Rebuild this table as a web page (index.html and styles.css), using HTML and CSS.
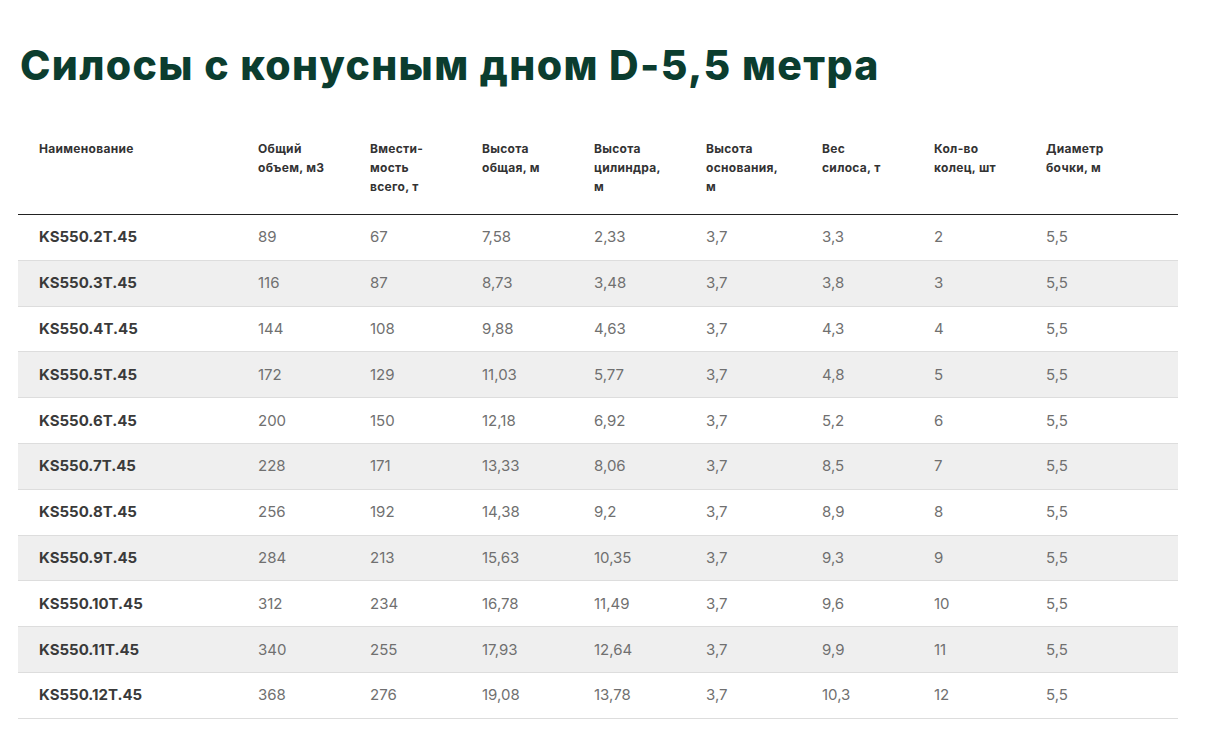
FILE: index.html
```html
<!DOCTYPE html>
<html lang="ru">
<head>
<meta charset="utf-8">
<title>Силосы с конусным дном D-5,5 метра</title>
<link rel="stylesheet" href="styles.css">
</head>
<body>
<main class="page">
  <h1 class="title">Силосы с конусным дном D-5,5 метра</h1>
  <table class="specs">
    <colgroup>
      <col class="c-name"><col class="c-n"><col class="c-n"><col class="c-n"><col class="c-n"><col class="c-w"><col class="c-n"><col class="c-n"><col class="c-last">
    </colgroup>
    <thead>
      <tr>
        <th>Наименование</th>
        <th>Общий<br>объем, м3</th>
        <th>Вмести-<br>мость<br>всего, т</th>
        <th>Высота<br>общая, м</th>
        <th>Высота<br>цилиндра,<br>м</th>
        <th>Высота<br>основания,<br>м</th>
        <th>Вес<br>силоса, т</th>
        <th>Кол-во<br>колец, шт</th>
        <th>Диаметр<br>бочки, м</th>
      </tr>
    </thead>
    <tbody>
      <tr><td>KS550.2T.45</td><td>89</td><td>67</td><td>7,58</td><td>2,33</td><td>3,7</td><td>3,3</td><td>2</td><td>5,5</td></tr>
      <tr><td>KS550.3T.45</td><td>116</td><td>87</td><td>8,73</td><td>3,48</td><td>3,7</td><td>3,8</td><td>3</td><td>5,5</td></tr>
      <tr><td>KS550.4T.45</td><td>144</td><td>108</td><td>9,88</td><td>4,63</td><td>3,7</td><td>4,3</td><td>4</td><td>5,5</td></tr>
      <tr><td>KS550.5T.45</td><td>172</td><td>129</td><td>11,03</td><td>5,77</td><td>3,7</td><td>4,8</td><td>5</td><td>5,5</td></tr>
      <tr><td>KS550.6T.45</td><td>200</td><td>150</td><td>12,18</td><td>6,92</td><td>3,7</td><td>5,2</td><td>6</td><td>5,5</td></tr>
      <tr><td>KS550.7T.45</td><td>228</td><td>171</td><td>13,33</td><td>8,06</td><td>3,7</td><td>8,5</td><td>7</td><td>5,5</td></tr>
      <tr><td>KS550.8T.45</td><td>256</td><td>192</td><td>14,38</td><td>9,2</td><td>3,7</td><td>8,9</td><td>8</td><td>5,5</td></tr>
      <tr><td>KS550.9T.45</td><td>284</td><td>213</td><td>15,63</td><td>10,35</td><td>3,7</td><td>9,3</td><td>9</td><td>5,5</td></tr>
      <tr><td>KS550.10T.45</td><td>312</td><td>234</td><td>16,78</td><td>11,49</td><td>3,7</td><td>9,6</td><td>10</td><td>5,5</td></tr>
      <tr><td>KS550.11T.45</td><td>340</td><td>255</td><td>17,93</td><td>12,64</td><td>3,7</td><td>9,9</td><td>11</td><td>5,5</td></tr>
      <tr><td>KS550.12T.45</td><td>368</td><td>276</td><td>19,08</td><td>13,78</td><td>3,7</td><td>10,3</td><td>12</td><td>5,5</td></tr>
    </tbody>
  </table>
</main>
</body>
</html>
```

FILE: styles.css
```css
* { box-sizing: border-box; }
html, body {
  margin: 0;
  padding: 0;
  background: #ffffff;
}
body {
  font-family: Inter, "Noto Sans", "Liberation Sans", sans-serif;
  color: #333333;
}
.page {
  padding: 0 0 0 18px;
  width: 1178px;
}
.title {
  margin: 0;
  padding: 40px 0 0 2px;
  font-size: 41px;
  line-height: 50px;
  font-weight: 800;
  color: #0b3d2f;
  letter-spacing: 1.35px;
}
.specs {
  margin-top: 38px;
  width: 1160px;
  border-collapse: collapse;
  table-layout: fixed;
}
.c-name { width: 219px; }
.c-n { width: 112px; }
.c-w { width: 116px; }
.c-last { width: 153px; }
.specs th {
  text-align: left;
  vertical-align: top;
  font-size: 12px;
  line-height: 19px;
  font-weight: 700;
  letter-spacing: 0.3px;
  color: #333333;
  padding: 11px 0 18px 21px;
  border-bottom: 1.5px solid #222222;
}
.specs td {
  height: 45.8px;
  padding: 0 0 1px 21px;
  font-size: 15px;
  color: #707070;
  border-bottom: 1px solid #dddddd;
  vertical-align: middle;
}
.specs td:first-child {
  font-weight: 700;
  color: #3a3a3a;
}
.specs tbody tr:nth-child(even) td {
  background: #efefef;
}
```
